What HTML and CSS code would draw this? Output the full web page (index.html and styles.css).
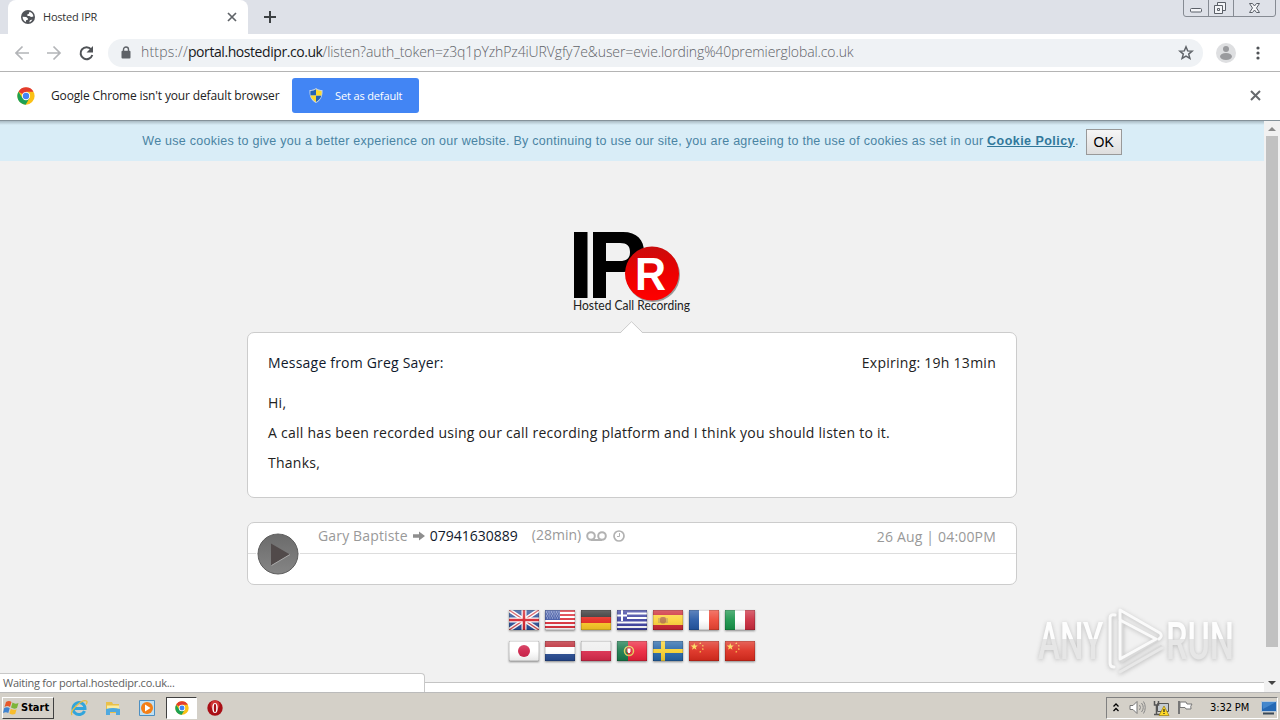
FILE: index.html
```html
<!DOCTYPE html>
<html lang="en">
<head>
    <meta charset="UTF-8">
    <meta name="viewport" content="width=device-width, initial-scale=1.0">
    <title>Hosted IPR</title>
    <link rel="stylesheet" href="styles.css">
</head>
<body>
    <!-- shared icons -->
    <svg class="defs" width="0" height="0">
        <defs>
            <linearGradient id="gloss" x1="0" y1="0" x2="0" y2="1">
                <stop offset="0" stop-color="#fff" stop-opacity=".28"/>
                <stop offset=".5" stop-color="#fff" stop-opacity=".08"/>
                <stop offset="1" stop-color="#000" stop-opacity=".1"/>
            </linearGradient>
            <symbol id="chrome" viewBox="0 0 48 48">
                <circle cx="24" cy="24" r="23" fill="#fbc116"/>
                <path d="M24 24L4 12.500A23 23 0 0 1 44 12.500H24z" fill="#e33b2e"/>
                <path d="M4 12.500A23 23 0 0 0 23 47L33.500 29.500H14.500z" fill="#1da153"/>
                <circle cx="24" cy="24" r="11" fill="#fff"/>
                <circle cx="24" cy="24" r="8.500" fill="#4285f4"/>
            </symbol>
            <symbol id="star" viewBox="-10 -10 20 20">
                <path d="M0-10L2.400-3.200 9.500-3.100 3.800 1.200 5.900 8.100 0 4-5.900 8.100-3.800 1.200-9.500-3.100-2.400-3.200z"/>
            </symbol>
            <symbol id="china" viewBox="0 0 30 20">
                <path fill="#dc2a1c" d="M0 0h30v20H0z"/>
                <g fill="#fbd84a">
                    <use href="#star" x="1.500" y="2" width="7.500" height="7.500"/>
                    <use href="#star" x="10" y="1" width="2.600" height="2.600"/>
                    <use href="#star" x="12.500" y="3.500" width="2.600" height="2.600"/>
                    <use href="#star" x="12.500" y="6.800" width="2.600" height="2.600"/>
                    <use href="#star" x="10" y="9.500" width="2.600" height="2.600"/>
                </g>
            </symbol>
        </defs>
    </svg>

    <div class="screen">
        <div class="tabs">
            <div class="tab">
                <svg class="globe" width="14" height="14" viewBox="0 0 14 14">
                    <circle cx="7" cy="7" r="7" fill="#505358"/>
                    <path d="M8.500 1.700c2.300.7 3.800 2.700 3.900 4.800l-2.300.6-1.700-1H6.700l-.7-1.300 1.800-1zM1.600 6.700l3.700.4 1.800 1.700-.6 1.200H5.200l-.3 2.100C3 11.400 1.500 9.200 1.600 6.700zM8.300 12.300l.6-2.100 2.500-.8c-.7 1.500-1.700 2.500-3.100 2.900z" fill="#fff"/>
                </svg>
                <span class="tab-title">Hosted IPR</span>
                <svg class="tab-close" width="10" height="10" viewBox="0 0 10 10"><path d="M1 1l8 8M9 1L1 9" stroke="#5f6368" stroke-width="1.700"/></svg>
            </div>
            <svg class="new-tab" width="12" height="12" viewBox="0 0 12 12"><path d="M6 0v12M0 6h12" stroke="#3c4043" stroke-width="2"/></svg>
            <svg class="window-buttons" width="94" height="18" viewBox="0 0 94 18">
                <path d="M.5 0v14q0 2.500 2.500 2.500h87q2.500 0 2.500-2.500V0M25.500 0v16.500M50.500 0v16.500" fill="none" stroke="#868b93"/>
                <g fill="#f4f5f8" stroke="#5b6068">
                    <rect x="7.500" y="8.500" width="11" height="3.500" rx="1"/>
                    <path d="M34.500 2.500h8v8h-8z"/>
                    <path d="M31.500 5.500h8v8h-8z"/>
                    <path d="M34.500 8.500h2v2h-2z"/>
                    <path d="M66.500 3.500h3l2 2.500 2-2.500h3L73.500 8l3 4.500h-3l-2-2.500-2 2.500h-3l3-4.500z"/>
                </g>
            </svg>
        </div>

        <div class="toolbar">
            <svg class="nav" width="80" height="16" viewBox="0 0 80 16">
                <g fill="none" stroke="#b3b5b8" stroke-width="1.700">
                    <path d="M14 8H1.500M7.500 1.500L1 8l6.500 6.500"/>
                    <path d="M32 8h12.500M38.500 1.500L45 8l-6.500 6.500"/>
                </g>
                <path d="M76.200 4.300A6 6 0 1 0 77.300 10" fill="none" stroke="#505357" stroke-width="2"/>
                <path d="M78 1v6.500h-6.500z" fill="#505357"/>
            </svg>
            <div class="omnibox">
                <svg width="10" height="13" viewBox="0 0 10 13"><path d="M2.500 5V3.500a2.500 2.500 0 0 1 5 0V5" fill="none" stroke="#5f6368" stroke-width="1.400"/><rect x=".5" y="4.800" width="9" height="7.700" rx="1" fill="#5f6368"/></svg>
                <div class="url"><span>https://</span><b>portal.hostedipr.co.uk</b>/listen?auth_token=z3q1pYzhPz4iURVgfy7e&amp;user=evie.lording%40premierglobal.co.uk</div>
                <svg class="bookmark" width="16" height="16" viewBox="-11 -11 22 22"><path d="M0-8.500L2.300-2.900 8.500-2.500 3.700 1.500 5.400 7.500 0 4.200-5.400 7.500-3.700 1.500-8.500-2.500-2.300-2.900z" fill="none" stroke="#5f6368" stroke-width="2"/></svg>
            </div>
            <svg class="avatar" width="20" height="20" viewBox="0 0 20 20"><circle cx="10" cy="10" r="10" fill="#dedfe1"/><circle cx="10" cy="6" r="3" fill="#9a9b9e"/><ellipse cx="10" cy="13.500" rx="6" ry="3.500" fill="#9a9b9e"/></svg>
            <svg class="menu" width="4" height="14" viewBox="0 0 4 14" fill="#505357"><circle cx="2" cy="2" r="1.600"/><circle cx="2" cy="7" r="1.600"/><circle cx="2" cy="12" r="1.600"/></svg>
        </div>

        <div class="infobar">
            <svg width="18" height="18"><use href="#chrome"/></svg>
            <span class="info-text">Google Chrome isn't your default browser</span>
            <div class="default-button">
                <svg width="14" height="15" viewBox="0 0 14 15">
                    <path d="M7 0c2 1.500 4 2 6.500 2 .4 6-1.500 10.500-6.500 13C2 12.500.100 8 .500 2 3 2 5 1.500 7 0z" fill="#c5d4e6"/>
                    <path d="M7 1.300V7.500H1.500Q1.200 5 1.500 3 5 2.800 7 1.300zM7 7.500h5.300Q11.500 11.500 7 13.900z" fill="#2362b5"/>
                    <path d="M7 1.300V7.500h5.400Q12.800 5 12.500 3 9 2.800 7 1.300zM7 7.500H1.600Q2.500 11.500 7 13.900z" fill="#fbd92e"/>
                </svg>
                <span>Set as default</span>
            </div>
            <svg class="info-close" width="11" height="11" viewBox="0 0 11 11"><path d="M1 1l9 9M10 1l-9 9" stroke="#66696d" stroke-width="2"/></svg>
        </div>

        <div class="viewport">
            <div class="page">
                <div class="cookie">
                    <span class="cookie-text">We use cookies to give you a better experience on our website. By continuing to use our site, you are agreeing to the use of cookies as set in our <a>Cookie Policy</a>.</span>
                    <button>OK</button>
                </div>

                <svg class="logo" width="124" height="90" viewBox="0 0 124 90">
                    <defs>
                        <linearGradient id="red" x1="0" y1="0" x2="0" y2="1"><stop offset="0" stop-color="#c90c0c"/><stop offset=".5" stop-color="#ed0000"/><stop offset="1" stop-color="#f00"/></linearGradient>
                    </defs>
                    <path d="M4 2h13.500v66H4zM23 2h30c14 0 21 8 21 20s-7 20-21 20H36v26H23zM36 13v18h14c7 0 10-3 10-9s-3-9-10-9z" fill="#000" fill-rule="evenodd"/>
                    <circle cx="83" cy="45" r="27" fill="#999"/>
                    <circle cx="82" cy="43.500" r="27" fill="url(#red)"/>
                    <text class="logo-r" x="65" y="60" textLength="31" lengthAdjust="spacingAndGlyphs">R</text>
                    <text class="logo-name" x="3" y="79.500" textLength="117" lengthAdjust="spacingAndGlyphs">Hosted Call Recording</text>
                </svg>

                <div class="panel message">
                    <svg class="pointer" width="22" height="12" viewBox="0 0 22 12"><path d="M0 11.500L10.500.800 21 11.500V12H0z" fill="#fff"/><path d="M0 11L10.500.700 21 11" fill="none" stroke="#ccc"/></svg>
                    <div class="message-head">
                        <span class="from">Message from Greg Sayer:</span>
                        <span class="expiring">Expiring: 19h 13min</span>
                    </div>
                    <p>Hi,</p>
                    <p>A call has been recorded using our call recording platform and I think you should listen to it.</p>
                    <p>Thanks,</p>
                </div>

                <div class="panel call">
                    <div class="call-head">
                        <span class="caller">Gary Baptiste</span>
                        <svg class="arrow" width="12" height="10" viewBox="0 0 12 10"><path d="M0 3.300h6V.500L12 5 6 9.500V6.700H0z" fill="#8e8e8e"/></svg>
                        <span class="number">07941630889</span>
                        <span class="length">(28min)</span>
                        <svg class="tape" width="21" height="10" viewBox="0 0 21 10" fill="none" stroke="#b2b2b2" stroke-width="2"><circle cx="5" cy="5" r="3.800"/><circle cx="16" cy="5" r="3.800"/><path d="M5 9h11"/></svg>
                        <svg class="clock" width="12" height="12" viewBox="0 0 12 12" fill="none" stroke="#b2b2b2"><circle cx="6" cy="6" r="5" stroke-width="1.700"/><path d="M6.500 3v3.500H4"/></svg>
                        <span class="date">26 Aug | 04:00PM</span>
                    </div>
                    <svg class="play" width="42" height="42" viewBox="0 0 42 42">
                        <defs><linearGradient id="disc" x1="0" y1="0" x2="0" y2="1"><stop offset="0" stop-color="#6b6b6b"/><stop offset="1" stop-color="#858585"/></linearGradient></defs>
                        <circle cx="21" cy="21" r="20" fill="url(#disc)" stroke="#5c5c5c"/>
                        <path d="M14 10.500v22L33 21.500z" fill="#514a4a"/>
                        <path d="M14.500 32.500L33 21.500" stroke="#aaa"/>
                    </svg>
                </div>

                <div class="flags">
                    <svg viewBox="0 0 30 20"><path fill="#2a4f98" d="M0 0h30v20H0z"/><path d="M0 0l30 20M30 0L0 20" stroke="#fff" stroke-width="4"/><path d="M0 0l30 20M30 0L0 20" stroke="#d34950" stroke-width="1.300"/><path d="M15 0v20M0 10h30" stroke="#fff" stroke-width="5"/><path d="M15 0v20M0 10h30" stroke="#d3222c" stroke-width="2.500"/><path class="shine" d="M0 0h30v20H0z"/></svg>
                    <svg viewBox="0 0 30 20"><path fill="#fff" d="M0 0h30v20H0z"/><path d="M0 1h30M0 5h30M0 9h30M0 13h30M0 17h30" stroke="#dc303b" stroke-width="2"/><path fill="#3d55a4" d="M0 0h15v10H0z"/><path d="M1 2h14M2 4h13M1 6h14M2 8h13" stroke="#c4cbe5" stroke-dasharray="1 1.500" stroke-width=".9"/><path class="shine" d="M0 0h30v20H0z"/></svg>
                    <svg viewBox="0 0 30 20"><path fill="#2c2c2c" d="M0 0h30v7H0z"/><path fill="#e4261c" d="M0 7h30v6H0z"/><path fill="#fbc823" d="M0 13h30v7H0z"/><path class="shine" d="M0 0h30v20H0z"/></svg>
                    <svg viewBox="0 0 30 20"><path fill="#3c40a0" d="M0 0h30v20H0z"/><path d="M0 3.500h30M0 8h30M0 12.500h30M0 17h30" stroke="#fff" stroke-width="2"/><path fill="#3c40a0" d="M0 0h10v11H0z"/><path d="M5 0v11M0 5.500h10" stroke="#fff" stroke-width="2"/><path class="shine" d="M0 0h30v20H0z"/></svg>
                    <svg viewBox="0 0 30 20"><path fill="#cc2632" d="M0 0h30v20H0z"/><path fill="#fcd238" d="M0 5h30v10H0z"/><rect x="7" y="7" width="6" height="6.500" rx="2" fill="#ba7846"/><path d="M6 8v5M14 8v5" stroke="#b18b65"/><path class="shine" d="M0 0h30v20H0z"/></svg>
                    <svg viewBox="0 0 30 20"><path fill="#fff" d="M0 0h30v20H0z"/><path fill="#2256a4" d="M0 0h10v20H0z"/><path fill="#ed4432" d="M20 0h10v20H20z"/><path class="shine" d="M0 0h30v20H0z"/></svg>
                    <svg viewBox="0 0 30 20"><path fill="#fff" d="M0 0h30v20H0z"/><path fill="#169348" d="M0 0h10v20H0z"/><path fill="#ca2a3d" d="M20 0h10v20H20z"/><path class="shine" d="M0 0h30v20H0z"/></svg>
                    <svg viewBox="0 0 30 20"><path fill="#fff" d="M0 0h30v20H0z"/><circle cx="15" cy="10" r="6" fill="#ce1d46"/><path class="shine" d="M0 0h30v20H0z"/></svg>
                    <svg viewBox="0 0 30 20"><path fill="#fff" d="M0 0h30v20H0z"/><path fill="#b9202c" d="M0 0h30v6H0z"/><path fill="#264a91" d="M0 13h30v7H0z"/><path class="shine" d="M0 0h30v20H0z"/></svg>
                    <svg viewBox="0 0 30 20"><path fill="#eee" d="M0 0h30v20H0z"/><path fill="#d9284a" d="M0 10h30v10H0z"/><path class="shine" d="M0 0h30v20H0z"/></svg>
                    <svg viewBox="0 0 30 20"><path fill="#eb2039" d="M0 0h30v20H0z"/><path fill="#16794a" d="M0 0h11v20H0z"/><circle cx="12" cy="10" r="4.500" fill="none" stroke="#e4cc57" stroke-width="1.500"/><path fill="#fff" stroke="#d52831" d="M10 7h4v4l-2 2-2-2z"/><path class="shine" d="M0 0h30v20H0z"/></svg>
                    <svg viewBox="0 0 30 20"><path fill="#2263a6" d="M0 0h30v20H0z"/><path d="M10 0v20M0 10h30" stroke="#f7d02d" stroke-width="4"/><path class="shine" d="M0 0h30v20H0z"/></svg>
                    <svg viewBox="0 0 30 20"><use href="#china"/><path class="shine" d="M0 0h30v20H0z"/></svg>
                    <svg viewBox="0 0 30 20"><use href="#china"/><path class="shine" d="M0 0h30v20H0z"/></svg>
                </div>
            </div>

            <div class="scrollbar">
                <svg width="8" height="4" viewBox="0 0 8 4"><path d="M0 4l4-4 4 4z" fill="#8a8a8a"/></svg>
                <div class="thumb"></div>
                <svg width="8" height="4" viewBox="0 0 8 4"><path d="M0 0l4 4 4-4z" fill="#444"/></svg>
            </div>

            <div class="status">Waiting for portal.hostedipr.co.uk...</div>

            <svg class="watermark" width="210" height="76" viewBox="0 0 210 76">
                <defs><linearGradient id="mark" gradientUnits="userSpaceOnUse" x1="0" y1="-38" x2="0" y2="0"><stop offset=".48" stop-color="#fdfdfd"/><stop offset=".48" stop-color="#e6e6e6"/></linearGradient></defs>
                <g class="mark-text">
                    <text transform="translate(2 54) scale(.65 1)">ANY</text>
                    <text transform="translate(130 54) scale(.67 1)">RUN</text>
                </g>
                <path class="mark-edge" d="M75 12v50M86 13v43L122 34M84 66l42-25"/>
                <path class="mark-line" d="M79 10q-5-1-5 3v45q0 4 4 4M84 53V5l40 23q3 3-1 6M84 15l36 19-36 20"/>
                <path class="mark-low" d="M84 67l42-24"/>
            </svg>
        </div>

        <div class="taskbar">
            <div class="start">
                <svg width="17" height="15" viewBox="0 0 17 15">
                    <path d="M3 2q3-2 5.500 0L7 7Q4.500 5 1.500 7z" fill="#e7592b"/>
                    <path d="M9.500 2.500Q12 4.500 15.500 3L14 8q-3 1.500-6-.5z" fill="#7db53a"/>
                    <path d="M1.200 8q3-1.500 5.500.2L5.300 13Q3 11.500 0 13z" fill="#3f83d0"/>
                    <path d="M7.800 8.800q2.800 1.700 5.800.4L12.200 14q-3 1.200-5.800-.500z" fill="#f8bd2c"/>
                </svg>
                <span>Start</span>
            </div>
            <div class="quick">
                <svg width="18" height="18" viewBox="0 0 18 18"><path d="M14.500 12A6 6 0 1 1 15 9.500H4" fill="none" stroke="#32a5dc" stroke-width="3"/><path d="M2 16C-1 12 12 0 16.500 2c1 .6.500 2-.500 3.500" fill="none" stroke="#e5bd43" stroke-width="1.300"/></svg>
                <svg width="18" height="18" viewBox="0 0 18 18"><path d="M2 3h6l1 2h6v9H2z" fill="#e9c04a"/><path d="M3 6.500h12v5H3z" fill="#fbeca0"/><path d="M2 10q7-2 14 0v6h-4v-3H6v3H2z" fill="#4fa9df"/></svg>
                <svg width="18" height="18" viewBox="0 0 18 18"><path d="M1.500 1.500h15v15h-15z" fill="#bfe0f3" stroke="#4d8fc1"/><circle cx="9" cy="9" r="6" fill="#f47f16"/><path d="M7 5.500v7L12.500 9z" fill="#fff"/></svg>
                <div class="active-task"><svg width="14" height="14"><use href="#chrome"/></svg></div>
                <svg width="16" height="16" viewBox="0 0 16 16"><circle cx="8" cy="8" r="7.700" fill="#a90f16"/><circle cx="8" cy="5" r="4.500" fill="#d03635"/><ellipse cx="8" cy="8" rx="2.700" ry="5" fill="#fff"/><ellipse cx="8" cy="8" rx="1.200" ry="4.200" fill="#a90f16"/></svg>
            </div>
            <div class="tray">
                <svg width="6" height="9" viewBox="0 0 6 9"><path d="M.5 3.500L3 1l2.500 2.500M.5 8L3 5.500 5.500 8" fill="none" stroke="#000" stroke-width="1.300"/></svg>
                <svg class="sound" width="17" height="15" viewBox="0 0 17 15"><path d="M1 5.500h3l4-4v12l-4-4H1z" fill="#fff" stroke="#777"/><path d="M10.500 5q2 2.500 0 5M12.500 3q3.500 4.500 0 9M14.500 1.500q3.500 6 0 12" fill="none" stroke="#888"/></svg>
                <svg class="network" width="17" height="16" viewBox="0 0 17 16"><path d="M4.500 3.500h11v8h-11z" fill="#c4cbd1" stroke="#555"/><path d="M1.500 1v4h4V1M3.500 5v9M1 14.500h7" fill="none" stroke="#555" stroke-width="1.500"/><path d="M11 6l5 9.500H6z" fill="#ffd926" stroke="#9a7b0c" stroke-width=".7"/><path d="M11 9v3M11 13v1" stroke="#222" stroke-width="1.200"/></svg>
                <svg class="flag" width="17" height="15" viewBox="0 0 17 15"><path d="M2 1v13" stroke="#777" stroke-width="2"/><path d="M3 2h6l1 2h5q-2 2-1 5H9L8 7.500H3z" fill="#fff" stroke="#777"/></svg>
                <span class="time">3:32 PM</span>
                <svg class="desktop" width="16" height="14" viewBox="0 0 16 14"><path d="M.5.5h15v10H.5z" fill="#2468b4" stroke="#b6c8d9"/><path d="M1 1h14L2 8z" fill="#4387cd"/><path d="M2 12.500h11" stroke="#394958" stroke-width="2"/></svg>
            </div>
        </div>
    </div>
</body>
</html>
```
FILE: styles.css
```css
* {
    box-sizing: border-box;
}
body {
    margin: 0;
    font-family: "Open Sans", sans-serif;
    color: #222;
    background: #f1f1f1;
}
svg {
    display: block;
    flex: none;
}
.defs {
    position: absolute;
}
.screen {
    width: 1280px;
    height: 720px;
    overflow: hidden;
    display: flex;
    flex-direction: column;
    white-space: nowrap;
}

/* browser */
.tabs {
    height: 34px;
    flex: none;
    display: flex;
    align-items: center;
    background: #dee1e8;
    padding-left: 8px;
}
.tab {
    width: 240px;
    height: 34px;
    display: flex;
    align-items: center;
    padding: 0 11px 0 13px;
    background: #fff;
    border-radius: 8px 8px 0 0;
}
.tab-title {
    margin-left: 8px;
    padding-bottom: 2px;
    font-size: 11px;
    letter-spacing: -.2px;
    color: #333;
}
.tab-close {
    margin-left: auto;
}
.new-tab {
    margin-left: 16px;
}
.window-buttons {
    margin-left: auto;
    margin-right: 3px;
    align-self: flex-start;
}
.toolbar {
    height: 38px;
    flex: none;
    display: flex;
    align-items: center;
    padding: 0 20px 0 15px;
    background: #fff;
    border-bottom: 1px solid #b4b4b4;
}
.omnibox {
    width: 1095px;
    height: 28px;
    margin-left: 13px;
    padding: 0 9px 0 13px;
    display: flex;
    align-items: center;
    background: #eff2f5;
    border-radius: 14px;
}
.url {
    margin-left: 10px;
    padding-bottom: 2px;
    font-size: 14px;
    font-weight: 300;
    letter-spacing: -.1px;
    color: #5f6368;
}
.url span {
    letter-spacing: .2px;
}
.url b {
    font-weight: 400;
    letter-spacing: -.43px;
    color: #17191c;
}
.bookmark {
    margin-left: auto;
}
.avatar {
    margin-left: 13px;
}
.menu {
    margin-left: auto;
}
.infobar {
    height: 49px;
    flex: none;
    display: flex;
    align-items: center;
    padding: 0 19px 1px 17px;
    background: #fff;
    border-bottom: 1px solid #85929a;
}
.info-text {
    margin-left: 16px;
    padding-bottom: 1px;
    width: 241px;
    font-size: 12px;
    letter-spacing: -.14px;
}
.default-button {
    width: 127px;
    height: 35px;
    display: flex;
    align-items: center;
    padding: 0 0 1px 17px;
    gap: 12px;
    font-size: 11px;
    letter-spacing: -.14px;
    color: #fff;
    background: #4285f4;
    border-radius: 3px;
}
.info-close {
    margin-left: auto;
}

/* page */
.viewport {
    position: relative;
    height: 571px;
    flex: none;
    display: flex;
    background: #fff;
}
.page {
    width: 1264px;
    height: 562px;
    display: flex;
    flex-direction: column;
    align-items: center;
    background: #f1f1f1;
    border-bottom: 1px solid #c4c4c4;
}
.cookie {
    width: 100%;
    height: 40px;
    flex: none;
    display: flex;
    justify-content: center;
    align-items: center;
    gap: 7px;
    padding-bottom: 1px;
    background: linear-gradient(#a9bac3, #d9edf7 4px);
    font-family: "Liberation Sans", Arial, sans-serif;
    font-size: 12.5px;
    letter-spacing: .27px;
    color: #4a84a3;
}
.cookie a {
    font-weight: bold;
    letter-spacing: .45px;
    text-decoration: underline;
    color: #31789b;
}
.cookie button {
    width: 36px;
    height: 26px;
    margin-top: 2px;
    padding: 0;
    font-family: "Liberation Sans", Arial, sans-serif;
    font-size: 14px;
    color: #000;
    background: linear-gradient(#f6f6f6, #dedede);
    border: 1px solid #999;
}
.logo {
    margin-top: 69px;
}
.logo-r {
    font: bold 47px "Liberation Sans", Arial, sans-serif;
    fill: #fff;
}
.logo-name {
    font: 12.5px Lato, sans-serif;
    fill: #222;
}
.panel {
    position: relative;
    width: 770px;
    flex: none;
    background: #fff;
    border: 1px solid #ccc;
    border-radius: 7px;
}
.message {
    height: 166px;
    margin-top: 12px;
    padding: 15px 20px;
    font-size: 14px;
    line-height: 30px;
    letter-spacing: .26px;
}
.pointer {
    position: absolute;
    left: 373px;
    top: -12px;
}
.message-head {
    display: flex;
    justify-content: space-between;
    margin-bottom: 10px;
}
.from {
    letter-spacing: .2px;
    color: #10192b;
}
.message p {
    margin: 0;
}
.call {
    height: 63px;
    margin-top: 24px;
    font-size: 14px;
    color: #999;
}
.call-head {
    height: 31px;
    display: flex;
    align-items: center;
    padding: 0 20px 5px 70px;
    border-bottom: 1px solid #ddd;
}
.caller {
    letter-spacing: .15px;
}
.arrow {
    margin: 0 5px;
}
.number {
    color: #10192b;
}
.length {
    margin-left: 14px;
    padding-bottom: 2px;
}
.tape {
    margin-left: 5px;
}
.clock {
    margin-left: 6px;
}
.date {
    margin-left: auto;
    padding-top: 2px;
    letter-spacing: .18px;
}
.play {
    position: absolute;
    left: 9px;
    top: 10px;
    border-radius: 50%;
    box-shadow: 0 0 0 1px #fff;
}
.flags {
    display: grid;
    grid-template-columns: repeat(7, 30px);
    gap: 11px 6px;
    margin-top: 25px;
}
.flags svg {
    width: 30px;
    height: 20px;
    box-shadow: 0 1px 2px #888;
}
.shine {
    fill: url(#gloss);
    stroke: rgba(0, 0, 0, .25);
}
.scrollbar {
    width: 16px;
    height: 571px;
    display: flex;
    flex-direction: column;
    align-items: center;
    padding: 6px 0 7px;
    background: #f1f1f1;
}
.thumb {
    width: 12px;
    height: 511px;
    margin: 5px 0 auto;
    background: #c1c1c1;
}
.status {
    position: absolute;
    left: 0;
    bottom: 0;
    width: 425px;
    height: 19px;
    padding-left: 3px;
    font-size: 11px;
    line-height: 18px;
    letter-spacing: -.25px;
    color: #606060;
    background: #fff;
    border: 1px solid #c8c8c8;
    border-left: 0;
    border-bottom: 0;
    border-radius: 0 4px 0 0;
}
.watermark {
    position: absolute;
    left: 1036px;
    top: 484px;
    filter: drop-shadow(0 1px 2px #bbb);
}
.mark-text {
    font: 500 51px Roboto, sans-serif;
    fill: url(#mark);
}
.mark-edge {
    fill: none;
    stroke: #d9d9d9;
    stroke-width: 3;
}
.mark-line,
.mark-low {
    fill: none;
    stroke: #fafafa;
    stroke-width: 3;
    stroke-linejoin: round;
    stroke-linecap: round;
}
.mark-low {
    stroke: #e8e8e8;
}

/* taskbar */
.taskbar {
    height: 28px;
    flex: none;
    display: flex;
    align-items: center;
    padding: 2px 2px 0;
    background: #d4d0c8;
    border-top: 1px solid #bbb;
}
.start {
    width: 52px;
    height: 22px;
    display: flex;
    align-items: center;
    gap: 1px;
    border: 1px solid #fff;
    border-right-color: #404040;
    border-bottom-color: #404040;
    font: bold 11px "DejaVu Sans Condensed", sans-serif;
    color: #000;
}
.quick {
    display: flex;
    align-items: center;
    margin-left: 16px;
    gap: 16px;
}
.active-task {
    width: 31px;
    height: 22px;
    margin: 0 -6px;
    display: flex;
    align-items: center;
    justify-content: center;
    background: #fff;
    border: 1px solid #404040;
    border-right-color: #fff;
    border-bottom-color: #fff;
}
.tray {
    width: 172px;
    height: 22px;
    margin-left: auto;
    display: flex;
    align-items: center;
    padding-left: 6px;
    border: 1px solid #808080;
    border-right-color: #fff;
    border-bottom-color: #fff;
}
.sound {
    margin-left: 10px;
}
.network {
    margin-left: 7px;
}
.flag {
    margin-left: 7px;
}
.time {
    margin-left: 16px;
    font: 11px "DejaVu Sans Condensed", sans-serif;
    letter-spacing: -.1px;
    color: #000;
}
.desktop {
    margin-left: auto;
}
```
